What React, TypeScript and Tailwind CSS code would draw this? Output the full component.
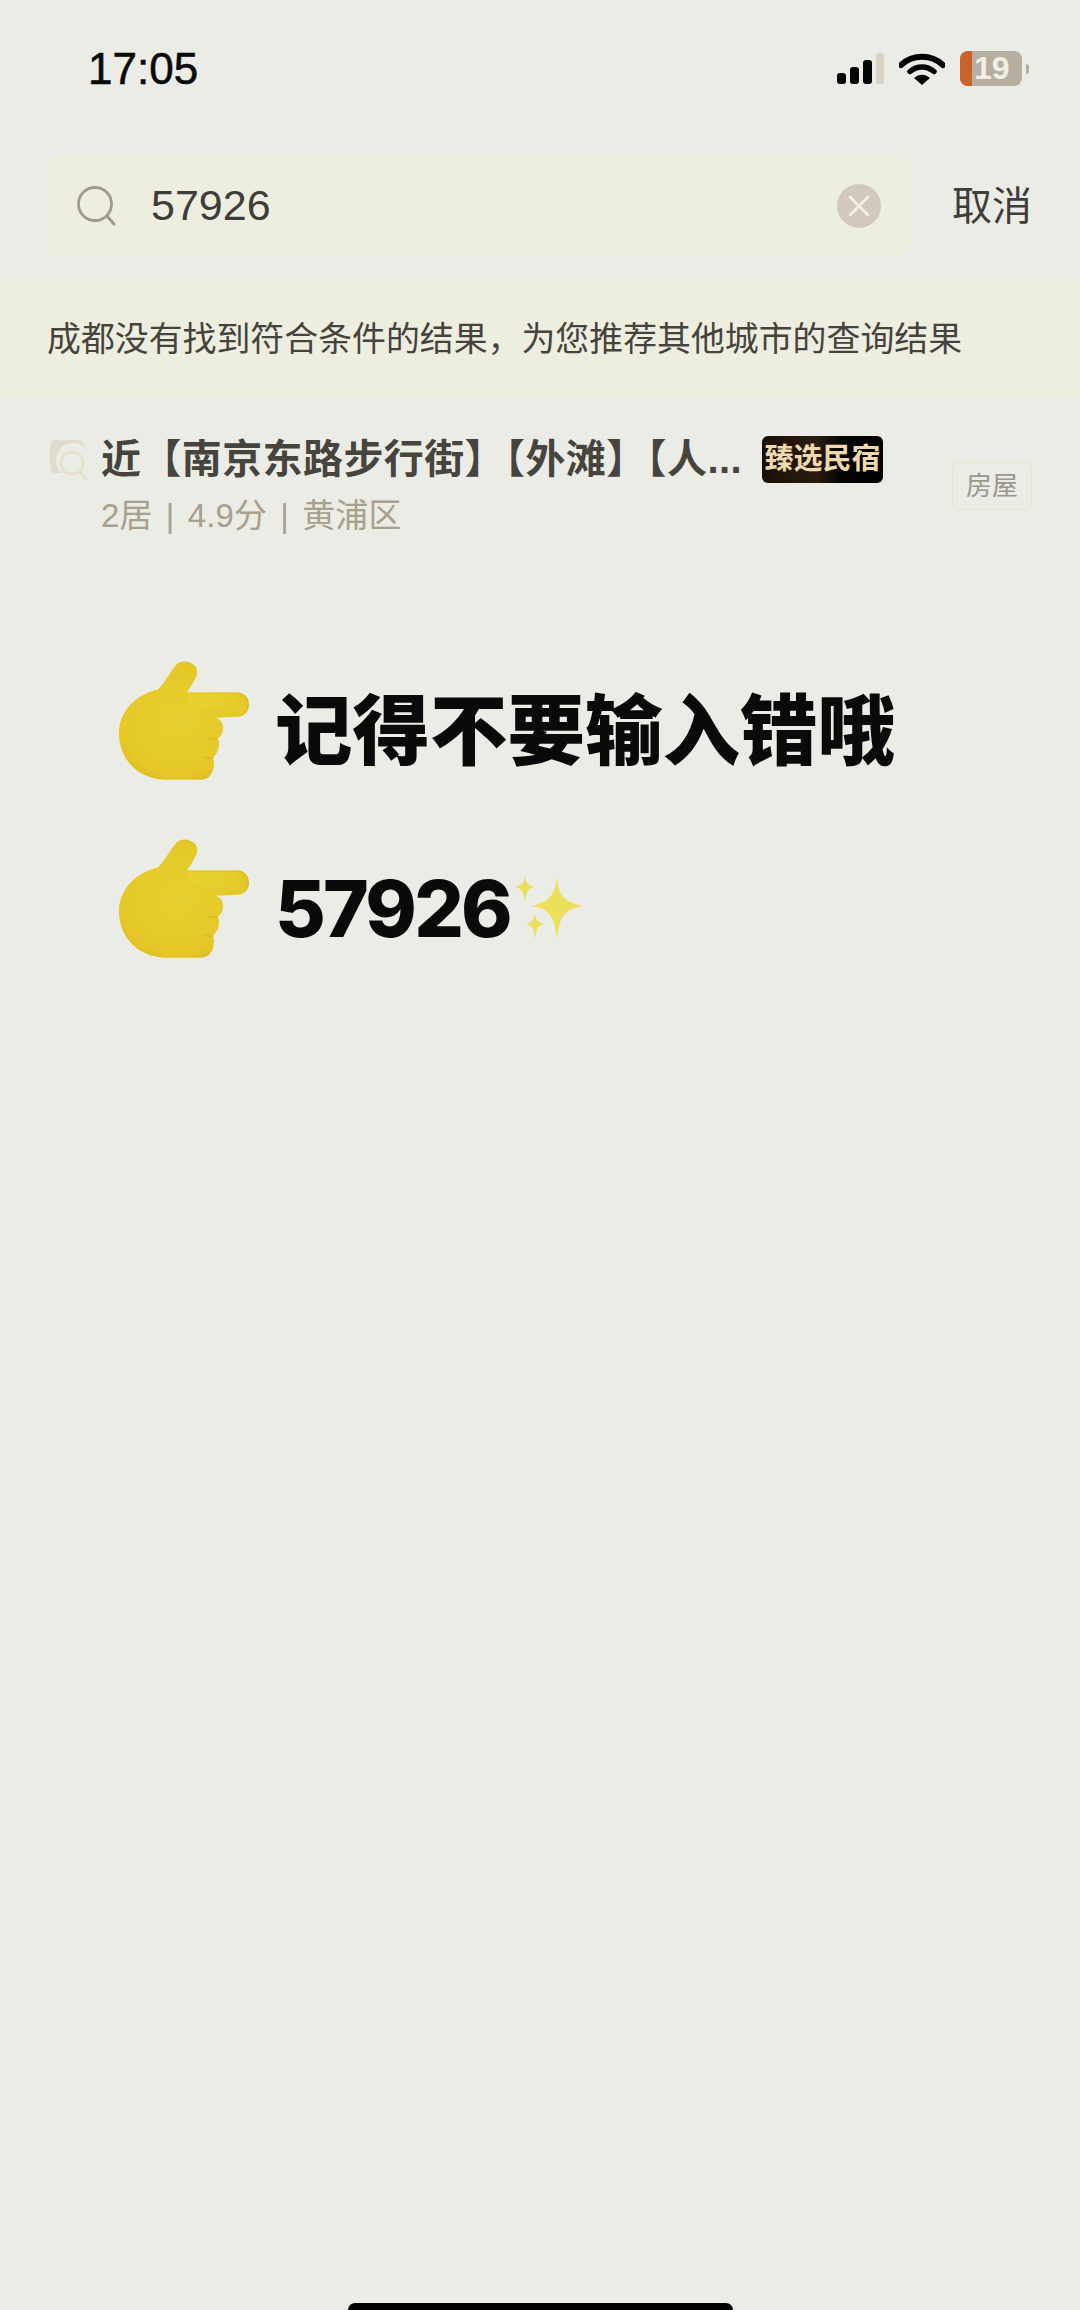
const cjk = "font-['Liberation_Sans','Noto_Sans_CJK_SC',sans-serif]";

function SignalIcon() {
  return (
    <svg viewBox="0 0 47 31" className="h-[31px] w-[47px]" aria-hidden>
      <rect x="0" y="20" width="9" height="11" rx="3" fill="#050505" />
      <rect x="13" y="14" width="9" height="17" rx="3" fill="#050505" />
      <rect x="26" y="7" width="9" height="24" rx="3" fill="#050505" />
      <rect x="39" y="0" width="8" height="31" rx="3" fill="#d9d3c6" />
    </svg>
  );
}

function WifiIcon() {
  return (
    <svg viewBox="0 0 46 32" className="h-[32px] w-[46px]" aria-hidden>
      <path d="M2 12 C14 1 32 1 44 12" fill="none" stroke="#050505" strokeWidth="6" strokeLinecap="round" />
      <path d="M11 18.5 C18 12.5 28 12.5 35 18.5" fill="none" stroke="#050505" strokeWidth="5.5" strokeLinecap="round" />
      <path d="M15 25 C20 20.5 26 20.5 31 25 L23 32 Z" fill="#050505" />
    </svg>
  );
}

function Battery() {
  return (
    <div className="flex items-center gap-[4px]">
      <div className="flex h-[35px] w-[62px] overflow-hidden rounded-[8px] bg-[#b6afa0]">
        <div className="h-full w-[12px] bg-[#c9622b]" />
        <span className="pl-[2px] font-['Liberation_Sans',sans-serif] text-[32px] leading-[35px] font-bold text-[#f1eee6]">19</span>
      </div>
      <div className="h-[10px] w-[3px] rounded-r-full bg-[#b6afa0]" />
    </div>
  );
}

function SearchIcon() {
  return (
    <svg viewBox="0 0 40 40" className="h-[40px] w-[40px] shrink-0" aria-hidden>
      <circle cx="19" cy="18" r="16.5" fill="none" stroke="#a09a8e" strokeWidth="2.8" />
      <path d="M31 30 L38 38" stroke="#a09a8e" strokeWidth="3" strokeLinecap="round" />
    </svg>
  );
}

function ClearIcon() {
  return (
    <svg viewBox="0 0 44 44" className="h-[44px] w-[44px]" aria-hidden>
      <circle cx="22" cy="22" r="22" fill="#d0c9bc" />
      <path d="M13 13 L31 31 M31 13 L13 31" stroke="#f3f1e8" strokeWidth="2.6" strokeLinecap="round" />
    </svg>
  );
}

function ResultIcon() {
  return (
    <svg viewBox="0 0 38 40" className="h-[40px] w-[38px] shrink-0" aria-hidden>
      <path d="M6 0 H28 C32 0 34 3 34 7 A16 16 0 0 0 12 33 H6 C2 33 0 31 0 27 V6 C0 2 2 0 6 0 Z" fill="#e0dbca" />
      <circle cx="22" cy="23" r="11" fill="none" stroke="#e6e0cd" strokeWidth="3" />
      <path d="M30 32 L36 39" stroke="#e6e0cd" strokeWidth="3" strokeLinecap="round" />
    </svg>
  );
}

function PointingHand({ id }: { id: string }) {
  return (
    <svg viewBox="88 65 390 356" className="h-[119px] w-[130px] shrink-0" aria-hidden>
      <defs>
        <radialGradient id={id} cx="45%" cy="50%" r="65%">
          <stop offset="0%" stopColor="#e6d02f" />
          <stop offset="70%" stopColor="#e5c828" />
          <stop offset="100%" stopColor="#dcae18" />
        </radialGradient>
      </defs>
      <path
        d="M205 150 C225 130 240 100 258 78 C272 60 305 62 320 85 C330 105 310 130 292 158 L440 158 C465 158 478 175 478 195 C478 218 462 232 440 232 L378 235 C395 240 402 255 400 270 C398 285 392 292 384 297 C392 310 390 335 370 355 C376 370 374 395 358 412 C350 420 340 421 320 421 L225 421 C150 418 88 365 88 280 C88 220 135 165 205 150 Z"
        fill={`url(#${id})`}
      />
      <path d="M292 162 C330 164 400 164 440 162 C462 162 474 177 474 195 C474 208 468 218 456 224 C420 212 340 205 290 200 Z" fill="#e6d42e" opacity="0.5" />
      <path d="M382 297 C374 300 366 299 358 296 M368 355 C360 358 354 357 346 354" fill="none" stroke="#d9ab17" strokeWidth="4" strokeLinecap="round" opacity="0.7" />
    </svg>
  );
}

function Sparkles() {
  return (
    <svg viewBox="0 0 70 66" className="ml-[4px] h-[66px] w-[70px]" aria-hidden>
      <path d="M43 0 C44 16 47 26 70 30 C50 32 45 42 43 64 C41 42 36 32 17 30 C36 27 42 16 43 0 Z" fill="#ece05a" />
      <path d="M11 0 C12 7 14 9 20 11 C14 13 12 16 11 27 C10 16 8 13 1 11 C8 9 10 7 11 0 Z" fill="#ece05a" />
      <path d="M21 38 C22 44 24 46 30 48 C24 50 22 52 21 64 C20 52 18 50 12 48 C18 46 20 44 21 38 Z" fill="#ece05a" />
    </svg>
  );
}

export default function App() {
  return (
    <div className={`relative h-[2310px] w-[1080px] overflow-hidden bg-[#ebece5] ${cjk}`}>
      {/* status bar */}
      <div className="flex h-[154px] items-start justify-between pr-[51px] pl-[88px]">
        <span className="mt-[43px] text-[44px] leading-[52px] font-medium text-[#0a0a0a] [-webkit-text-stroke:0.6px_#0a0a0a]">17:05</span>
        <div className="mt-[51px] flex items-center gap-[15px]">
          <SignalIcon />
          <WifiIcon />
          <Battery />
        </div>
      </div>

      {/* search */}
      <div className="flex items-center pr-[48px] pl-[47px]">
        <div className="flex h-[103px] w-[863px] items-center rounded-[12px] bg-[#eeeee0] pr-[29px] pl-[29px]">
          <SearchIcon />
          <span className="ml-[35px] flex-1 text-[43px] leading-none text-[#3f3d39]">57926</span>
          <ClearIcon />
        </div>
        <span className="ml-auto text-[40px] leading-none text-[#3f3d39]">取消</span>
      </div>

      {/* notice */}
      <div className="mt-[23px] flex h-[118px] items-center bg-[#eeeee0] pt-[2px] pl-[47px]">
        <span className="text-[33.9px] leading-none text-[#46433e]">成都没有找到符合条件的结果，为您推荐其他城市的查询结果</span>
      </div>

      {/* result */}
      <div className="mt-[38px] flex items-center justify-between pr-[48px] pl-[50px]">
        <div>
          <div className="flex items-center">
            <ResultIcon />
            <span className="ml-[13px] text-[40px] leading-[47px] font-bold tracking-[0.4px] text-[#47443e]">近【南京东路步行街】【外滩】【人...</span>
            <span className="ml-[20px] flex h-[47px] w-[121px] items-center justify-center rounded-[6px] bg-[linear-gradient(90deg,#1a0f08,#2c1c10_45%,#050505_65%,#000)] text-[29px] leading-none font-bold text-[#efd9ac]">臻选民宿</span>
          </div>
          <div className="mt-[13px] pl-[51px] text-[33px] leading-[39px] tracking-[0.1px] text-[#a99f8d] [word-spacing:4px]">2居 | 4.9分 | 黄浦区</div>
        </div>
        <span className="flex h-[48px] w-[80px] items-center justify-center rounded-[5px] border border-[#ece3c9] text-[26px] leading-none text-[#9a968c]">房屋</span>
      </div>

      {/* promo */}
      <div className="mt-[126px] flex flex-col gap-[59px] pl-[119px]">
        <div className="flex items-center gap-[26px]">
          <PointingHand id="hand-a" />
          <span className="pt-[24px] text-[77.5px] leading-none font-black text-[#0a0a0a]">记得不要输入错哦</span>
        </div>
        <div className="flex items-center gap-[26px]">
          <PointingHand id="hand-b" />
          <div className="flex items-center pt-[20px]">
            <span className="font-['Inter',sans-serif] text-[78px] leading-none font-extrabold tracking-[-2.8px] text-[#0a0a0a]">57926</span>
            <Sparkles />
          </div>
        </div>
      </div>

      {/* home indicator */}
      <div className="absolute bottom-0 left-[348px] h-[7px] w-[385px] rounded-t-[8px] bg-black" />
    </div>
  );
}
